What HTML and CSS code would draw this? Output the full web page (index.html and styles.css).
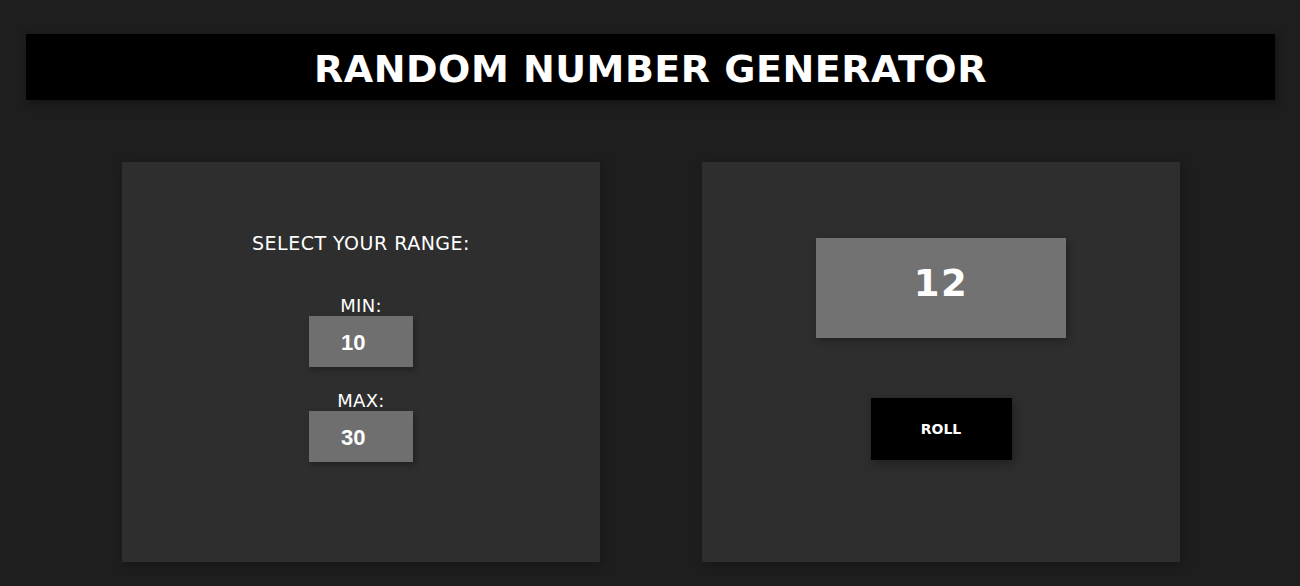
FILE: index.html
```html
<!DOCTYPE html>
<html>
<head>
<meta charset="utf-8">
<link rel="stylesheet" href="styles.css">
</head>
<body>
<header class="header"><h1 class="title">RANDOM NUMBER GENERATOR</h1></header>
<main class="cards">
  <section class="card card-range">
    <p class="range-title">SELECT YOUR RANGE:</p>
    <div class="field">
      <label class="field-label" for="min">MIN:</label>
      <input class="field-input" id="min" type="text" value="10">
    </div>
    <div class="field">
      <label class="field-label" for="max">MAX:</label>
      <input class="field-input" id="max" type="text" value="30">
    </div>
  </section>
  <section class="card card-result">
    <div class="result">12</div>
    <button class="roll">ROLL</button>
  </section>
</main>
</body>
</html>
```
FILE: styles.css
```css
html, body {
  margin: 0;
  padding: 0;
  background: #1e1e1e;
  height: 100%;
}
body {
  font-family: "DejaVu Sans", Verdana, sans-serif;
  color: #fff;
  padding-top: 34px;
  box-sizing: border-box;
}
.header {
  margin: 0 25px 0 26px;
  height: 66px;
  box-sizing: border-box;
  padding-top: 4px;
  background: #000;
  display: flex;
  align-items: center;
  justify-content: center;
  box-shadow: 2px 3px 8px rgba(0,0,0,0.35);
}
.title {
  margin: 0;
  font-size: 38px;
  font-weight: bold;
  letter-spacing: 0.5px;
}
.cards {
  display: flex;
  justify-content: center;
  gap: 102px;
  margin-top: 62px;
  padding-left: 2px;
}
.card {
  width: 478px;
  height: 400px;
  background: #2e2e2e;
  box-sizing: border-box;
  display: flex;
  flex-direction: column;
  align-items: center;
  box-shadow: 2px 3px 10px rgba(0,0,0,0.25);
}
.card-range {
  padding-top: 70px;
}
.range-title {
  margin: 0 0 41px;
  font-size: 19px;
  line-height: 22px;
  letter-spacing: 0.5px;
}
.field {
  display: flex;
  flex-direction: column;
  align-items: center;
  margin-bottom: 23px;
}
.field-label {
  font-size: 18px;
  line-height: 22px;
  letter-spacing: 0.3px;
  margin-bottom: -1px;
}
.field-input {
  width: 104px;
  height: 51px;
  box-sizing: border-box;
  border: none;
  outline: none;
  background: #6f6f6f;
  color: #fff;
  font-family: "Liberation Sans", Arial, sans-serif;
  font-weight: bold;
  font-size: 22px;
  padding: 2px 0 0 32px;
  box-shadow: 2px 3px 6px rgba(0,0,0,0.3);
}
.card-result {
  padding-top: 76px;
}
.result {
  width: 250px;
  height: 100px;
  box-sizing: border-box;
  padding-bottom: 9px;
  background: #727272;
  display: flex;
  align-items: center;
  justify-content: center;
  font-size: 37px;
  font-weight: bold;
  letter-spacing: 1.5px;
  box-shadow: 2px 3px 8px rgba(0,0,0,0.3);
}
.roll {
  margin-top: 60px;
  width: 141px;
  height: 62px;
  border: none;
  background: #000;
  color: #fff;
  font-family: "DejaVu Sans", Verdana, sans-serif;
  font-weight: bold;
  font-size: 14px;
  box-shadow: 2px 3px 10px rgba(0,0,0,0.35);
}
```
